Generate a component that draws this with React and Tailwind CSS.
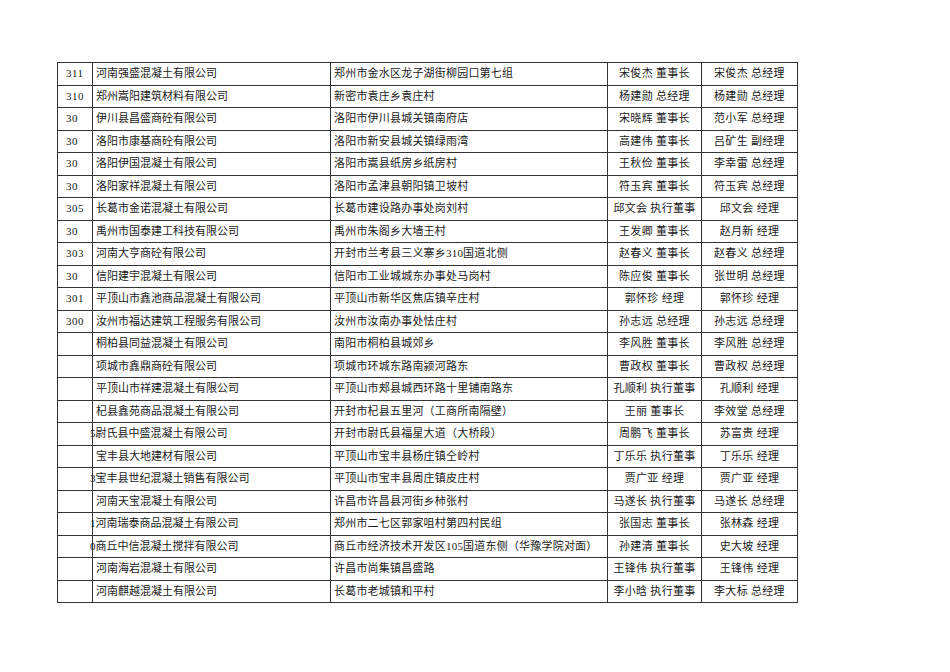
const rows = [
  ["311", "", "河南强盛混凝土有限公司", "郑州市金水区龙子湖街柳园口第七组", "宋俊杰 董事长", "宋俊杰 总经理"],
  ["310", "", "郑州嵩阳建筑材料有限公司", "新密市袁庄乡袁庄村", "杨建勋 总经理", "杨建勋 总经理"],
  ["30", "", "伊川县昌盛商砼有限公司", "洛阳市伊川县城关镇南府店", "宋晓辉 董事长", "范小军 总经理"],
  ["30", "", "洛阳市康基商砼有限公司", "洛阳市新安县城关镇绿雨湾", "高建伟 董事长", "吕矿生 副经理"],
  ["30", "", "洛阳伊国混凝土有限公司", "洛阳市嵩县纸房乡纸房村", "王秋俭 董事长", "李幸雷 总经理"],
  ["30", "", "洛阳家祥混凝土有限公司", "洛阳市孟津县朝阳镇卫坡村", "符玉宾 董事长", "符玉宾 总经理"],
  ["305", "", "长葛市金诺混凝土有限公司", "长葛市建设路办事处岗刘村", "邱文会 执行董事", "邱文会 经理"],
  ["30", "", "禹州市国泰建工科技有限公司", "禹州市朱阁乡大墙王村", "王发卿 董事长", "赵月新 经理"],
  ["303", "", "河南大亨商砼有限公司", "开封市兰考县三义寨乡310国道北侧", "赵春义 董事长", "赵春义 总经理"],
  ["30", "", "信阳建宇混凝土有限公司", "信阳市工业城城东办事处马岗村", "陈应俊 董事长", "张世明 总经理"],
  ["301", "", "平顶山市鑫池商品混凝土有限公司", "平顶山市新华区焦店镇辛庄村", "郭怀珍 经理", "郭怀珍 经理"],
  ["300", "", "汝州市福达建筑工程服务有限公司", "汝州市汝南办事处怯庄村", "孙志远 总经理", "孙志远 总经理"],
  ["", "", "桐柏县同益混凝土有限公司", "南阳市桐柏县城郊乡", "李风胜 董事长", "李风胜 总经理"],
  ["", "", "项城市鑫鼎商砼有限公司", "项城市环城东路南颍河路东", "曹政权 董事长", "曹政权 总经理"],
  ["", "", "平顶山市祥建混凝土有限公司", "平顶山市郏县城西环路十里铺南路东", "孔顺利 执行董事", "孔顺利 经理"],
  ["", "", "杞县鑫苑商品混凝土有限公司", "开封市杞县五里河（工商所南隔壁）", "王丽 董事长", "李效堂 总经理"],
  ["", "5", "尉氏县中盛混凝土有限公司", "开封市尉氏县福星大道（大桥段）", "周鹏飞 董事长", "苏富贵 经理"],
  ["", "", "宝丰县大地建材有限公司", "平顶山市宝丰县杨庄镇仝岭村", "丁乐乐 执行董事", "丁乐乐 经理"],
  ["", "3", "宝丰县世纪混凝土销售有限公司", "平顶山市宝丰县周庄镇皮庄村", "贾广亚 经理", "贾广亚 经理"],
  ["", "", "河南天宝混凝土有限公司", "许昌市许昌县河街乡柿张村", "马遂长 执行董事", "马遂长 总经理"],
  ["", "1", "河南瑞泰商品混凝土有限公司", "郑州市二七区郭家咀村第四村民组", "张国志 董事长", "张林森 经理"],
  ["", "0", "商丘中信混凝土搅拌有限公司", "商丘市经济技术开发区105国道东侧（华豫学院对面）", "孙建清 董事长", "史大坡 经理"],
  ["", "", "河南海岩混凝土有限公司", "许昌市尚集镇昌盛路", "王锋伟 执行董事", "王锋伟 经理"],
  ["", "", "河南麒越混凝土有限公司", "长葛市老城镇和平村", "李小晗 执行董事", "李大标 总经理"],
];

const font = { fontFamily: '"Liberation Serif", "Noto Sans CJK SC", serif' };

export default function App() {
  return (
    <div className="w-[950px] h-[672px] bg-white pt-[62px] pl-[57px]" style={font}>
      <table className="border-collapse table-fixed w-[740px] text-[11px] text-[#1a1a1a]">
        <colgroup>
          <col className="w-[35px]" />
          <col className="w-[238px]" />
          <col className="w-[277px]" />
          <col className="w-[94px]" />
          <col className="w-[96px]" />
        </colgroup>
        <tbody>
          {rows.map((r, i) => (
            <tr key={i} className="h-[22.5px]">
              <td className="border border-[#333] pl-[8px] p-0 leading-none tracking-[0.5px]">{r[0]}</td>
              <td className="border border-[#333] border-l-black pl-[3px] p-0 leading-none whitespace-nowrap overflow-visible">
                {r[1] && <span className="-ml-[6px]">{r[1]}</span>}
                {r[2]}
              </td>
              <td className="border border-[#333] pl-[3px] p-0 leading-none tracking-[0.2px] whitespace-nowrap">{r[3]}</td>
              <td className="border border-[#333] p-0 text-center leading-none tracking-[0.3px] whitespace-nowrap">{r[4]}</td>
              <td className="border border-[#333] p-0 text-center leading-none tracking-[0.3px] whitespace-nowrap">{r[5]}</td>
            </tr>
          ))}
        </tbody>
      </table>
    </div>
  );
}
